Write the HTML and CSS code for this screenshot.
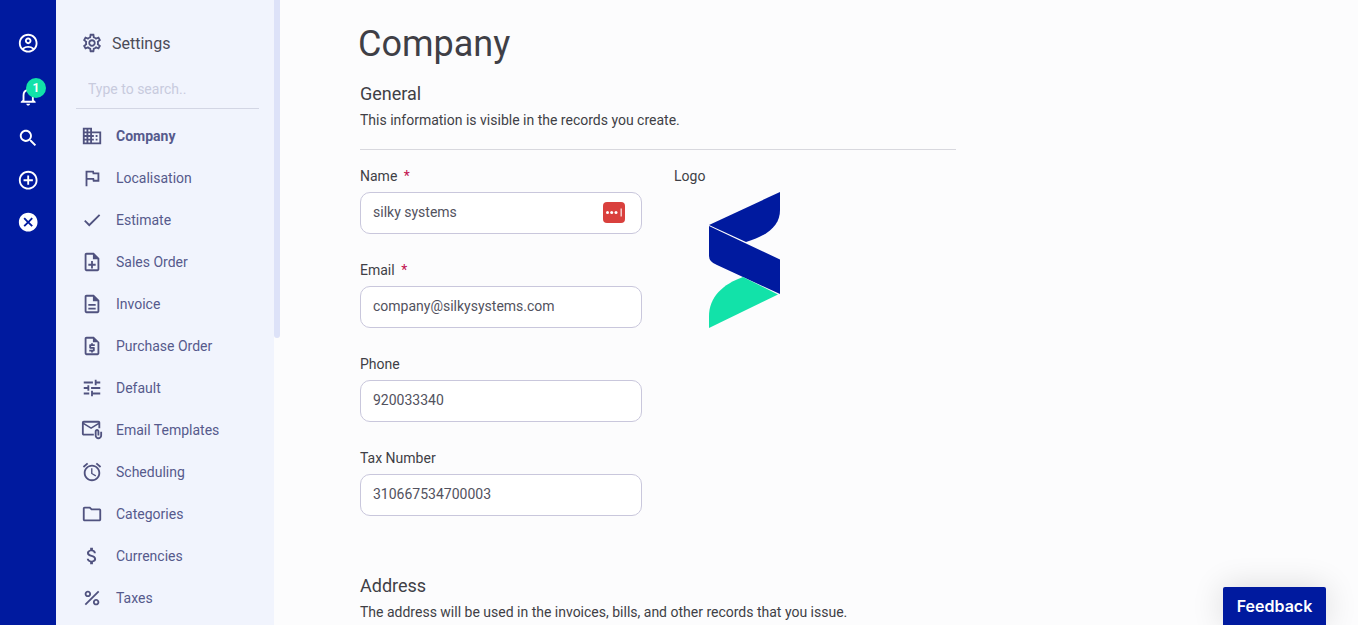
FILE: index.html
```html
<!DOCTYPE html>
<html lang="en">
<head>
  <meta charset="UTF-8" />
  <title>Company - Settings</title>
  <link rel="stylesheet" href="styles.css">
</head>
<body>

<div class="app">

  <!-- Icon rail -->
  <nav class="rail">
    <a class="rail-item rail-first"><svg viewBox="0 0 24 24"><path d="M12 2C6.48 2 2 6.48 2 12s4.48 10 10 10 10-4.48 10-10S17.52 2 12 2zM7.35 18.5C8.66 17.56 10.26 17 12 17s3.34.56 4.65 1.5C15.34 19.44 13.74 20 12 20s-3.34-.56-4.65-1.5zm10.79-1.38C16.45 15.8 14.32 15 12 15s-4.45.8-6.14 2.12C4.7 15.73 4 13.95 4 12c0-4.42 3.58-8 8-8s8 3.58 8 8c0 1.95-.7 3.73-1.86 5.12zM12 6c-1.93 0-3.5 1.57-3.5 3.5S10.07 13 12 13s3.5-1.57 3.5-3.5S13.93 6 12 6zm0 5c-.83 0-1.5-.67-1.5-1.5S11.17 8 12 8s1.5.67 1.5 1.5S12.83 11 12 11z"/></svg></a>
    <a class="rail-item rail-bell"><svg viewBox="0 0 24 24"><path d="M12 22c1.1 0 2-.9 2-2h-4c0 1.1.9 2 2 2zm6-6v-5c0-3.07-1.63-5.64-4.5-6.32V4c0-.83-.67-1.5-1.5-1.5s-1.5.67-1.5 1.5v.68C7.64 5.36 6 7.92 6 11v5l-2 2v1h16v-1l-2-2zm-2 1H8v-6c0-2.48 1.51-4.5 4-4.5s4 2.02 4 4.5v6z"/></svg><span class="badge">1</span></a>
    <a class="rail-item"><svg viewBox="0 0 24 24"><path d="M15.5 14h-.79l-.28-.27C15.41 12.59 16 11.11 16 9.5 16 5.91 13.09 3 9.5 3S3 5.91 3 9.5 5.91 16 9.5 16c1.61 0 3.09-.59 4.23-1.57l.27.28v.79l5 4.99L20.49 19l-4.99-5zm-6 0C7.01 14 5 11.99 5 9.5S7.01 5 9.5 5 14 7.01 14 9.5 11.99 14 9.5 14z"/></svg></a>
    <a class="rail-item"><svg viewBox="0 0 24 24"><path d="M13 7h-2v4H7v2h4v4h2v-4h4v-2h-4V7zm-1-5C6.48 2 2 6.48 2 12s4.48 10 10 10 10-4.48 10-10S17.52 2 12 2zm0 18c-4.41 0-8-3.59-8-8s3.59-8 8-8 8 3.59 8 8-3.59 8-8 8z"/></svg></a>
    <a class="rail-item"><svg viewBox="0 0 24 24"><path d="M12 2C6.47 2 2 6.47 2 12s4.47 10 10 10 10-4.47 10-10S17.53 2 12 2zm5 13.59L15.59 17 12 13.41 8.41 17 7 15.59 10.59 12 7 8.41 8.41 7 12 10.59 15.59 7 17 8.41 13.41 12 17 15.59z"/></svg></a>
  </nav>

  <!-- Settings menu -->
  <aside class="sidebar">
    <div class="menu">
      <div class="menu-title">
        <svg viewBox="0 0 24 24"><path d="M19.43 12.98c.04-.32.07-.64.07-.98 0-.34-.03-.66-.07-.98l2.11-1.65c.19-.15.24-.42.12-.64l-2-3.46c-.09-.16-.26-.25-.44-.25-.06 0-.12.01-.17.03l-2.49 1c-.52-.4-1.08-.73-1.69-.98l-.38-2.65C14.46 2.18 14.25 2 14 2h-4c-.25 0-.46.18-.49.42l-.38 2.65c-.61.25-1.17.59-1.69.98l-2.49-1c-.06-.02-.12-.03-.18-.03-.17 0-.34.09-.43.25l-2 3.46c-.13.22-.07.49.12.64l2.11 1.65c-.04.32-.07.65-.07.98 0 .33.03.66.07.98l-2.11 1.65c-.19.15-.24.42-.12.64l2 3.46c.09.16.26.25.44.25.06 0 .12-.01.17-.03l2.49-1c.52.4 1.08.73 1.69.98l.38 2.65c.03.24.24.42.49.42h4c.25 0 .46-.18.49-.42l.38-2.65c.61-.25 1.17-.59 1.69-.98l2.49 1c.06.02.12.03.18.03.17 0 .34-.09.43-.25l2-3.46c.12-.22.07-.49-.12-.64l-2.11-1.65zm-1.98-1.71c.04.31.05.52.05.73 0 .21-.02.43-.05.73l-.14 1.13.89.7 1.08.84-.7 1.21-1.27-.51-1.04-.42-.9.68c-.43.32-.84.56-1.25.73l-1.06.43-.16 1.13-.2 1.35h-1.4l-.19-1.35-.16-1.13-1.06-.43c-.43-.18-.83-.41-1.23-.71l-.91-.7-1.06.43-1.27.51-.7-1.21 1.08-.84.89-.7-.14-1.13c-.03-.31-.05-.54-.05-.74s.02-.43.05-.73l.14-1.13-.89-.7-1.08-.84.7-1.21 1.27.51 1.04.42.9-.68c.43-.32.84-.56 1.25-.73l1.06-.43.16-1.13.2-1.35h1.39l.19 1.35.16 1.13 1.06.43c.43.18.83.41 1.23.71l.91.7 1.06-.43 1.27-.51.7 1.21-1.07.85-.89.7.14 1.13zM12 8c-2.21 0-4 1.79-4 4s1.79 4 4 4 4-1.79 4-4-1.79-4-4-4zm0 6c-1.1 0-2-.9-2-2s.9-2 2-2 2 .9 2 2-.9 2-2 2z"/></svg>
        <span>Settings</span>
      </div>
      <input class="menu-search" type="text" placeholder="Type to search.." />
      <ul class="menu-list">
        <li class="menu-item active"><svg viewBox="0 0 24 24"><path d="M12 7V3H2v18h20V7H12zM6 19H4v-2h2v2zm0-4H4v-2h2v2zm0-4H4V9h2v2zm0-4H4V5h2v2zm4 12H8v-2h2v2zm0-4H8v-2h2v2zm0-4H8V9h2v2zm0-4H8V5h2v2zm10 12h-8v-2h2v-2h-2v-2h2v-2h-2V9h8v10zm-2-8h-2v2h2v-2zm0 4h-2v2h2v-2z"/></svg>Company</li>
        <li class="menu-item"><svg viewBox="0 0 24 24"><path d="M12.36 6l.4 2H18v6h-3.36l-.4-2H7V6h5.36M14 4H5v17h2v-7h5.6l.4 2h7V6h-5.6L14 4z"/></svg>Localisation</li>
        <li class="menu-item"><svg viewBox="0 0 24 24"><path d="M9 16.2L4.8 12l-1.4 1.4L9 19 21 7l-1.4-1.4L9 16.2z"/></svg>Estimate</li>
        <li class="menu-item"><svg viewBox="0 0 24 24"><path d="M13 11h-2v3H8v2h3v3h2v-3h3v-2h-3zm1-9H6c-1.1 0-2 .9-2 2v16c0 1.1.89 2 1.99 2H18c1.1 0 2-.9 2-2V8l-6-6zm4 18H6V4h7v5h5v11z"/></svg>Sales Order</li>
        <li class="menu-item"><svg viewBox="0 0 24 24"><path d="M8 16h8v2H8zm0-4h8v2H8zm6-10H6c-1.1 0-2 .9-2 2v16c0 1.1.89 2 1.99 2H18c1.1 0 2-.9 2-2V8l-6-6zm4 18H6V4h7v5h5v11z"/></svg>Invoice</li>
        <li class="menu-item"><svg viewBox="0 0 24 24"><path d="M14 2H6c-1.1 0-2 .9-2 2v16c0 1.1.89 2 1.99 2H18c1.1 0 2-.9 2-2V8l-6-6zM6 20V4h7v4h5v12H6zm5-1h2v-1h1c.55 0 1-.45 1-1v-3c0-.55-.45-1-1-1h-3v-1h4v-2h-2V9h-2v1h-1c-.55 0-1 .45-1 1v3c0 .55.45 1 1 1h3v1H9v2h2v1z"/></svg>Purchase Order</li>
        <li class="menu-item"><svg viewBox="0 0 24 24"><path d="M3 17v2h6v-2H3zM3 5v2h10V5H3zm10 16v-2h8v-2h-8v-2h-2v6h2zM7 9v2H3v2h4v2h2V9H7zm14 4v-2H11v2h10zm-6-4h2V7h4V5h-4V3h-2v6z"/></svg>Default</li>
        <li class="menu-item"><svg viewBox="0 0 24 24"><path d="M21 10V4c0-1.1-.9-2-2-2H3c-1.1 0-1.99.9-1.99 2L1 16c0 1.1.9 2 2 2h11v-2H3V6l8 5 8-5v4h2zm-10-1L3 4h16l-8 5zM21 14v4c0 1.1-.9 2-2 2s-2-.9-2-2v-4.5c0-.28.22-.5.5-.5s.5.22.5.5V18h2v-4.5c0-1.38-1.12-2.5-2.5-2.5S15 12.12 15 13.5V18c0 2.21 1.79 4 4 4s4-1.79 4-4v-4h-2z"/></svg>Email Templates</li>
        <li class="menu-item"><svg viewBox="0 0 24 24"><path d="M22 5.72l-4.6-3.86-1.29 1.53 4.6 3.86L22 5.72zM7.88 3.39L6.6 1.86 2 5.71l1.29 1.53 4.59-3.85zM12.5 8H11v6l4.75 2.85.75-1.23-4-2.37V8zM12 4c-4.97 0-9 4.03-9 9s4.03 9 9 9 9-4.03 9-9-4.03-9-9-9zm0 16c-3.87 0-7-3.13-7-7s3.13-7 7-7 7 3.13 7 7-3.13 7-7 7z"/></svg>Scheduling</li>
        <li class="menu-item"><svg viewBox="0 0 24 24"><path d="M9.17 6l2 2H20v10H4V6h5.17M10 4H4c-1.1 0-1.99.9-1.99 2L2 18c0 1.1.9 2 2 2h16c1.1 0 2-.9 2-2V8c0-1.1-.9-2-2-2h-8l-2-2z"/></svg>Categories</li>
        <li class="menu-item"><svg viewBox="0 0 24 24"><path d="M11.8 10.9c-2.27-.59-3-1.2-3-2.15 0-1.09 1.01-1.85 2.7-1.85 1.78 0 2.44.85 2.5 2.1h2.21c-.07-1.72-1.12-3.3-3.21-3.81V3h-3v2.16c-1.94.42-3.5 1.68-3.5 3.61 0 2.31 1.91 3.46 4.7 4.13 2.5.6 3 1.48 3 2.41 0 .69-.49 1.79-2.7 1.79-2.06 0-2.87-.92-2.98-2.1h-2.2c.12 2.19 1.76 3.42 3.68 3.83V21h3v-2.15c1.95-.37 3.5-1.5 3.5-3.55 0-2.84-2.43-3.81-4.7-4.4z"/></svg>Currencies</li>
        <li class="menu-item"><svg viewBox="0 0 24 24"><path d="M7.5 11C9.43 11 11 9.43 11 7.5S9.43 4 7.5 4 4 5.57 4 7.5 5.57 11 7.5 11zm0-5C8.33 6 9 6.67 9 7.5S8.33 9 7.5 9 6 8.33 6 7.5 6.67 6 7.5 6zM4 18.59L18.59 4 20 5.41 5.41 20zM16.5 13c-1.93 0-3.5 1.57-3.5 3.5s1.57 3.5 3.5 3.5 3.5-1.57 3.5-3.5-1.57-3.5-3.5-3.5zm0 5c-.83 0-1.5-.67-1.5-1.5s.67-1.5 1.5-1.5 1.5.67 1.5 1.5-.67 1.5-1.5 1.5z"/></svg>Taxes</li>
      </ul>
    </div>
    <div class="scroll-thumb"></div>
  </aside>

  <!-- Page content -->
  <main class="content">
    <h1>Company</h1>

    <section class="section">
      <h2>General</h2>
      <p>This information is visible in the records you create.</p>
      <div class="form-grid">
        <div class="fields">
          <div class="field">
            <label for="name">Name <span class="req">*</span></label>
            <div class="input-wrap">
              <input id="name" type="text" value="silky systems" />
              <svg class="pw-icon" viewBox="0 0 22 22"><rect width="22" height="21" rx="4" fill="#d9403d"/><circle cx="4.5" cy="10.5" r="1.5" fill="#fff"/><circle cx="8.7" cy="10.5" r="1.5" fill="#fff"/><circle cx="13" cy="10.5" r="1.5" fill="#fff"/><rect x="17.6" y="6.5" width="1.1" height="8" fill="#fff"/></svg>
            </div>
          </div>
          <div class="field">
            <label for="email">Email <span class="req">*</span></label>
            <input id="email" type="text" value="company@silkysystems.com" />
          </div>
          <div class="field">
            <label for="phone">Phone</label>
            <input id="phone" type="text" value="920033340" />
          </div>
          <div class="field">
            <label for="tax">Tax Number</label>
            <input id="tax" type="text" value="310667534700003" />
          </div>
        </div>
        <div class="logo-col">
          <label>Logo</label>
          <svg class="logo" viewBox="0 0 71 136">
            <path fill="#001a9f" d="M0 33L71 0V18C71 33 60 43 37 50Z"/>
            <path fill="#001a9f" d="M0 34L71 67.5V102L8 73Q0 70 0 64Z"/>
            <path fill="#12e2a9" d="M34 85L69 102.5L0 136V124C0 105 14 92 34 85Z"/>
          </svg>
        </div>
      </div>
    </section>

    <section class="section section-address">
      <h2>Address</h2>
      <p>The address will be used in the invoices, bills, and other records that you issue.</p>
    </section>
  </main>

  <button class="feedback">Feedback</button>
</div>

</body>
</html>
```

FILE: styles.css
```css
html, body { height: 100%; }
body { margin: 0; font-family: Roboto, Arial, sans-serif; background: #fcfcfd; color: #3f3f46; overflow: hidden; }
.app { display: flex; height: 100vh; overflow: hidden; position: relative; }

/* icon rail */
.rail { width: 56px; flex: none; background: #001a9f; padding-top: 22.5px; box-sizing: border-box; }
.rail-item { display: flex; align-items: center; justify-content: center; height: 42px; position: relative; }
.rail-first { margin-bottom: 10.5px; }
.rail-item svg { width: 22.4px; height: 22.4px; fill: #fff; }
.badge {
  position: absolute;
  top: 3px;
  left: 26px;
  width: 20px;
  height: 20px;
  border-radius: 50%;
  background: #12e2a9;
  color: #fff;
  font-size: 12px;
  font-weight: 700;
  line-height: 20px;
  text-align: center;
}

/* settings menu */
.sidebar { width: 224px; flex: none; display: flex; align-items: flex-start; height: 100%; }
.menu { width: 218px; height: 100%; flex: none; background: #f1f4fd; padding: 22px 15px 0 20px; box-sizing: border-box; }
.scroll-thumb { width: 6px; height: 338px; flex: none; background: #dde2f8; border-radius: 0 0 3px 3px; }
.menu-title { display: flex; align-items: center; gap: 9px; height: 42px; padding-left: 5px; font-size: 16px; color: #4a4b57; }
.menu-title svg { width: 22px; height: 22px; fill: #50527f; }
.menu-search {
  display: block;
  width: 100%;
  height: 45px;
  box-sizing: border-box;
  border: none;
  border-bottom: 1px solid #d3d6e4;
  background: transparent;
  padding: 5px 12px 0;
  font-family: inherit;
  font-size: 14px;
  outline: none;
}
.menu-search::placeholder { color: #c8cbdd; }
.menu-list { list-style: none; margin: 6px 0 0; padding: 0; }
.menu-item { display: flex; align-items: center; gap: 13px; height: 42px; padding-left: 5px; font-size: 14px; color: #565a8c; white-space: nowrap; }
.menu-item svg { width: 22px; height: 22px; fill: #50527f; flex: none; }
.menu-item.active { font-weight: 700; }

/* content */
.content { flex: 1; padding: 0 0 0 80px; min-width: 0; }
h1 { margin: 0 0 0 -2px; height: 86px; font-size: 36px; font-weight: 400; line-height: 88px; color: #3f3f46; }
.section h2 { margin: 0; font-size: 18px; font-weight: 400; line-height: 16px; color: #3f3f46; }
.section p { margin: 10px 0 0; font-size: 14px; line-height: 16px; color: #3f3f46; }
.form-grid { width: 596px; margin-top: 21px; padding-top: 18px; border-top: 1px solid #d8d8de; display: grid; grid-template-columns: 282px 1fr; column-gap: 32px; }
.field { height: 94px; }
label { display: block; font-size: 14px; line-height: 16px; margin-bottom: 8px; color: #3f3f46; }
.req { color: #c2124f; margin-left: 3px; }
.field input {
  display: block;
  width: 282px;
  height: 42px;
  box-sizing: border-box;
  border: 1px solid #c9c7dc;
  border-radius: 10px;
  background: #fff;
  padding: 0 12px 2px;
  font-family: inherit;
  font-size: 14px;
  color: #52525e;
  outline: none;
}
.input-wrap { position: relative; }
.pw-icon { position: absolute; top: 10px; right: 17px; width: 22px; height: 22px; }
.logo { display: block; width: 71px; height: 136px; margin-left: 35px; }
.section-address { margin-top: 34px; }

/* feedback tab */
.feedback {
  position: absolute;
  right: 32px;
  bottom: 0;
  width: 103px;
  height: 38px;
  border: none;
  border-radius: 2px 2px 0 0;
  background: #001a9f;
  color: #fff;
  font-family: Inter, Arial, sans-serif;
  font-size: 16px;
  font-weight: 600;
  box-shadow: 0 0 32px rgba(0, 0, 0, 0.14);
}
```
